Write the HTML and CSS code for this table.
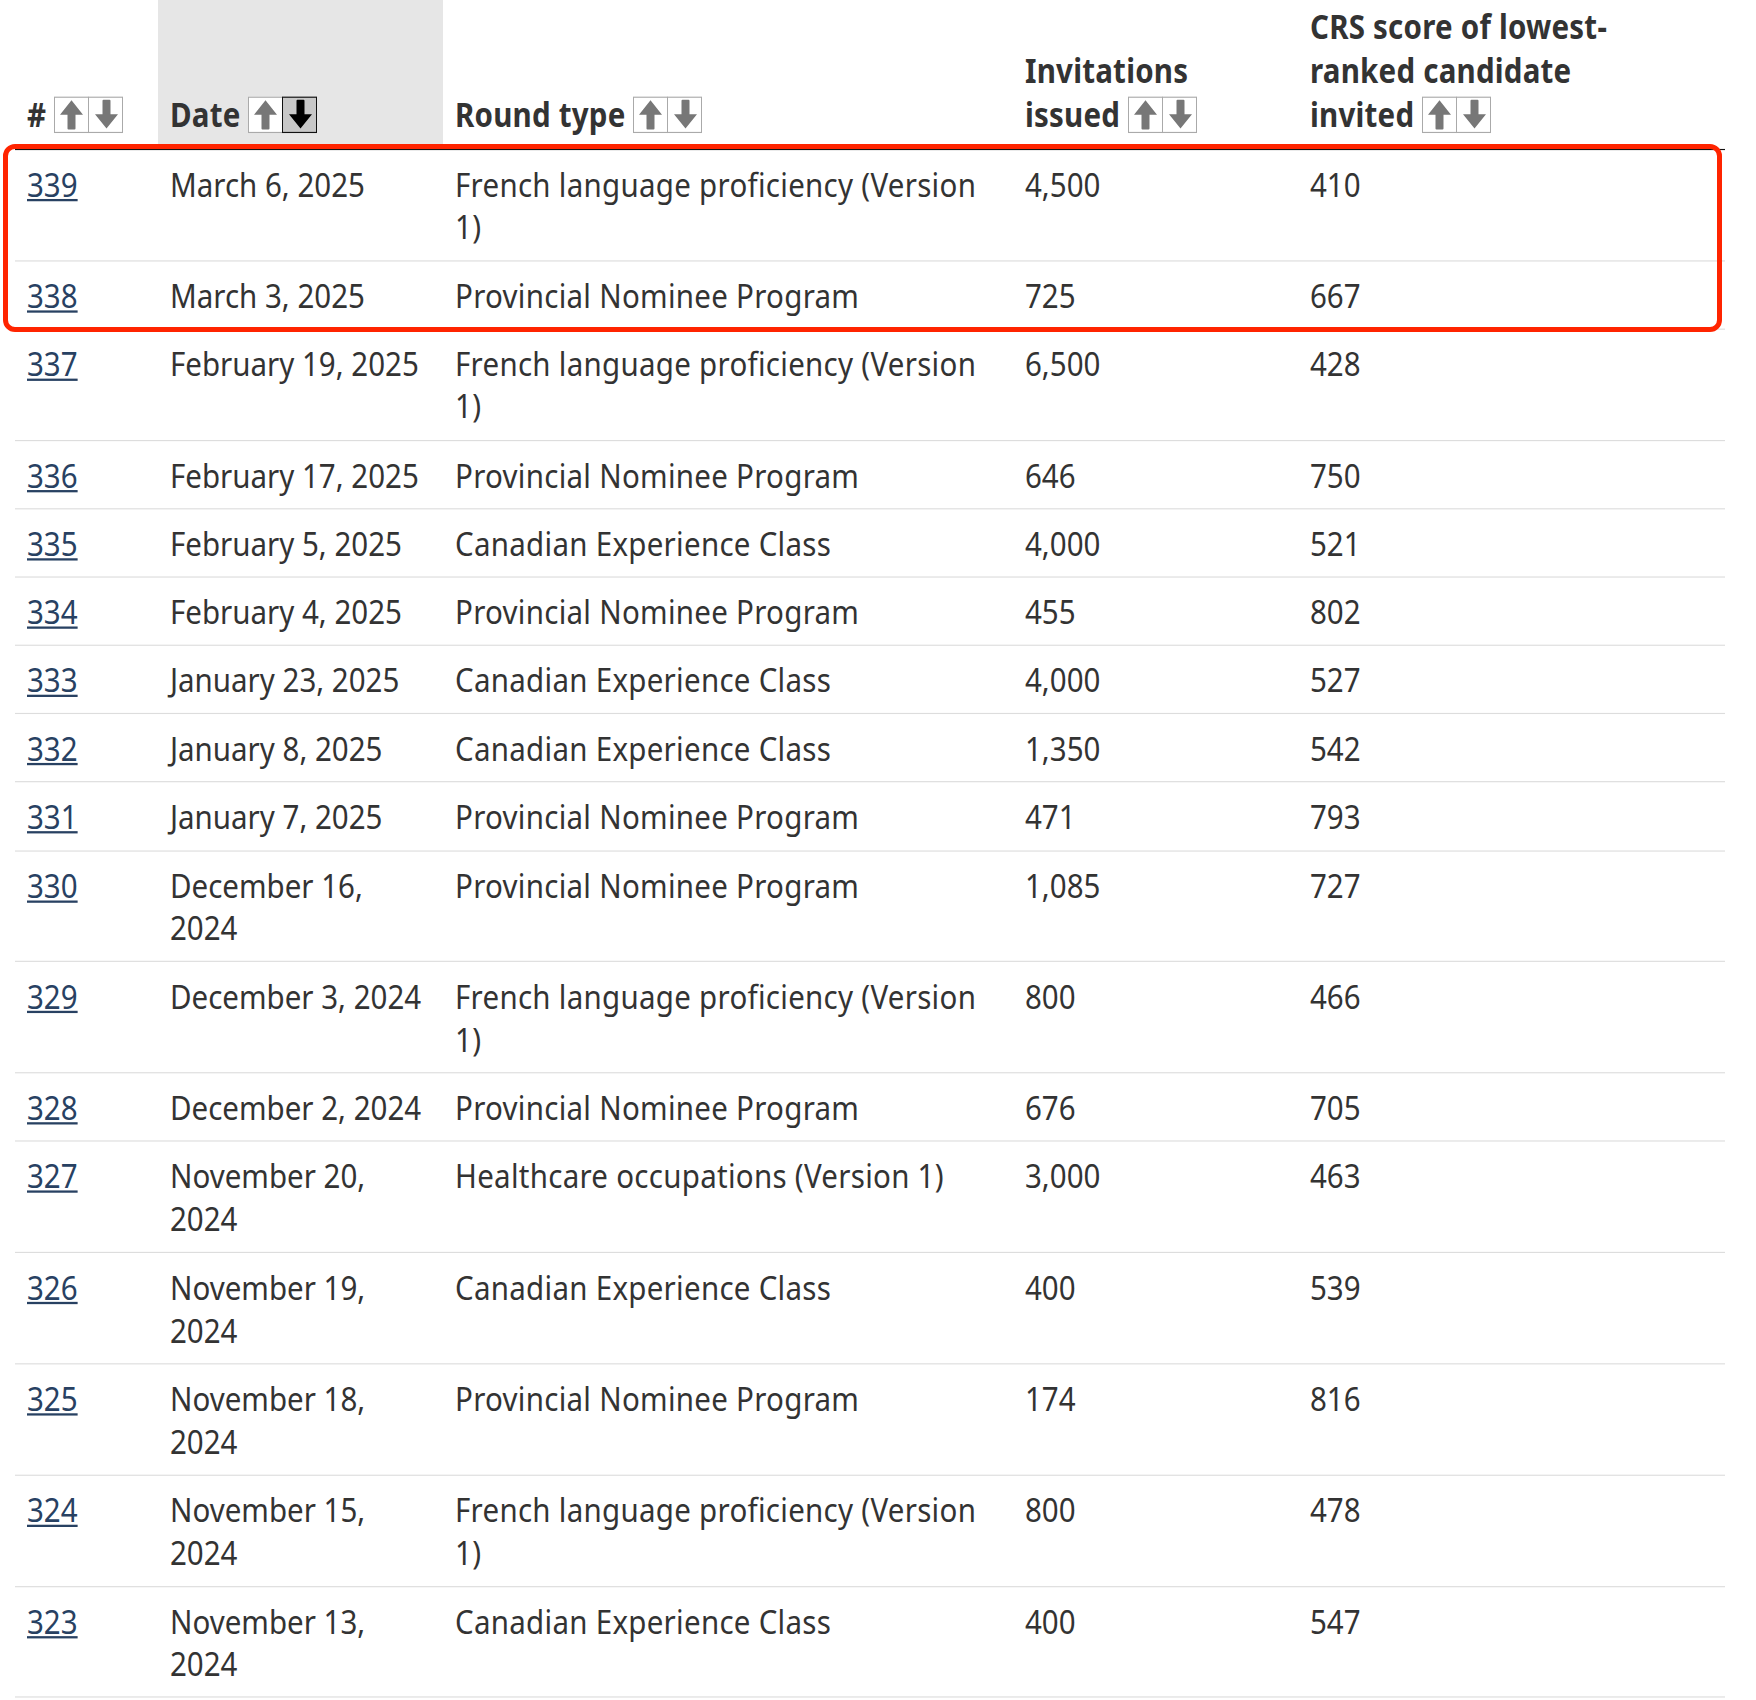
FILE: index.html
```html
<!DOCTYPE html>
<html lang="en">
<head>
<meta charset="utf-8">
<title>Express Entry rounds of invitations</title>
<link rel="stylesheet" href="styles.css">
</head>
<body>
<div class="stage">
<table class="draws">
<colgroup>
<col class="c-num"><col class="c-date"><col class="c-type"><col class="c-inv"><col class="c-crs">
</colgroup>
<thead>
<tr>
<th><span class="nw"># <span class="sort"><svg class="sb" viewBox="0 0 33 34" preserveAspectRatio="none"><path d="M16.5 2.5L28 17h-7.5v14q0 1-1 1h-6q-1 0-1-1V17H5z"/></svg><svg class="sb" viewBox="0 0 33 34" preserveAspectRatio="none"><path d="M14.5 2h6q1 0 1 1v13.5H29L17.5 31 6 16.5h7.5V3q0-1 1-1z"/></svg></span></span></th>
<th class="sorted"><span class="nw">Date <span class="sort"><svg class="sb" viewBox="0 0 33 34" preserveAspectRatio="none"><path d="M16.5 2.5L28 17h-7.5v14q0 1-1 1h-6q-1 0-1-1V17H5z"/></svg><svg class="sb on" viewBox="0 0 33 34" preserveAspectRatio="none"><path d="M14.5 2h6q1 0 1 1v13.5H29L17.5 31 6 16.5h7.5V3q0-1 1-1z"/></svg></span></span></th>
<th>Round <span class="nw">type <span class="sort"><svg class="sb" viewBox="0 0 33 34" preserveAspectRatio="none"><path d="M16.5 2.5L28 17h-7.5v14q0 1-1 1h-6q-1 0-1-1V17H5z"/></svg><svg class="sb" viewBox="0 0 33 34" preserveAspectRatio="none"><path d="M14.5 2h6q1 0 1 1v13.5H29L17.5 31 6 16.5h7.5V3q0-1 1-1z"/></svg></span></span></th>
<th>Invitations <span class="nw">issued <span class="sort"><svg class="sb" viewBox="0 0 33 34" preserveAspectRatio="none"><path d="M16.5 2.5L28 17h-7.5v14q0 1-1 1h-6q-1 0-1-1V17H5z"/></svg><svg class="sb" viewBox="0 0 33 34" preserveAspectRatio="none"><path d="M14.5 2h6q1 0 1 1v13.5H29L17.5 31 6 16.5h7.5V3q0-1 1-1z"/></svg></span></span></th>
<th class="crs">CRS score of lowest-ranked candidate <span class="nw">invited <span class="sort"><svg class="sb" viewBox="0 0 33 34" preserveAspectRatio="none"><path d="M16.5 2.5L28 17h-7.5v14q0 1-1 1h-6q-1 0-1-1V17H5z"/></svg><svg class="sb" viewBox="0 0 33 34" preserveAspectRatio="none"><path d="M14.5 2h6q1 0 1 1v13.5H29L17.5 31 6 16.5h7.5V3q0-1 1-1z"/></svg></span></span></th>
</tr>
</thead>
<tbody>
<tr><td><a href="#">339</a></td><td>March 6, 2025</td><td>French language proficiency (Version 1)</td><td>4,500</td><td>410</td></tr>
<tr><td><a href="#">338</a></td><td>March 3, 2025</td><td>Provincial Nominee Program</td><td>725</td><td>667</td></tr>
<tr><td><a href="#">337</a></td><td>February 19, 2025</td><td>French language proficiency (Version 1)</td><td>6,500</td><td>428</td></tr>
<tr><td><a href="#">336</a></td><td>February 17, 2025</td><td>Provincial Nominee Program</td><td>646</td><td>750</td></tr>
<tr><td><a href="#">335</a></td><td>February 5, 2025</td><td>Canadian Experience Class</td><td>4,000</td><td>521</td></tr>
<tr><td><a href="#">334</a></td><td>February 4, 2025</td><td>Provincial Nominee Program</td><td>455</td><td>802</td></tr>
<tr><td><a href="#">333</a></td><td>January 23, 2025</td><td>Canadian Experience Class</td><td>4,000</td><td>527</td></tr>
<tr><td><a href="#">332</a></td><td>January 8, 2025</td><td>Canadian Experience Class</td><td>1,350</td><td>542</td></tr>
<tr><td><a href="#">331</a></td><td>January 7, 2025</td><td>Provincial Nominee Program</td><td>471</td><td>793</td></tr>
<tr><td><a href="#">330</a></td><td>December 16, 2024</td><td>Provincial Nominee Program</td><td>1,085</td><td>727</td></tr>
<tr><td><a href="#">329</a></td><td>December 3, 2024</td><td>French language proficiency (Version 1)</td><td>800</td><td>466</td></tr>
<tr><td><a href="#">328</a></td><td>December 2, 2024</td><td>Provincial Nominee Program</td><td>676</td><td>705</td></tr>
<tr><td><a href="#">327</a></td><td>November 20, 2024</td><td>Healthcare occupations (Version 1)</td><td>3,000</td><td>463</td></tr>
<tr><td><a href="#">326</a></td><td>November 19, 2024</td><td>Canadian Experience Class</td><td>400</td><td>539</td></tr>
<tr><td><a href="#">325</a></td><td>November 18, 2024</td><td>Provincial Nominee Program</td><td>174</td><td>816</td></tr>
<tr><td><a href="#">324</a></td><td>November 15, 2024</td><td>French language proficiency (Version 1)</td><td>800</td><td>478</td></tr>
<tr><td><a href="#">323</a></td><td>November 13, 2024</td><td>Canadian Experience Class</td><td>400</td><td>547</td></tr>
</tbody>
</table>
</div>
<div class="highlight" aria-hidden="true"></div>
</body>
</html>
```

FILE: styles.css
```css
html, body {
  margin: 0;
  padding: 0;
  background: #ffffff;
}

body {
  position: relative;
  height: 1700px;
  overflow: hidden;
  font-family: "Noto Sans", "Open Sans", "DejaVu Sans", sans-serif;
  color: #333333;
}

.stage {
  padding-left: 15px;
  transform: scaleY(1.137);
  transform-origin: 0 0;
}

.draws {
  width: 1710px;
  border-collapse: collapse;
  table-layout: fixed;
  font-size: 29.5px;
}

.c-num { width: 143px; }
.c-date { width: 285px; }
.c-type { width: 570px; }
.c-inv { width: 285px; }
.c-crs { width: 427px; }

.draws th {
  text-align: left;
  vertical-align: bottom;
  font-weight: 700;
  line-height: 39px;
  letter-spacing: 0.22px;
  padding: 2.8px 12px 11px;
  border-bottom: 1px solid #111111;
}

.draws th.sorted {
  background: #e6e6e6;
}

.draws th.crs {
  padding-right: 44px;
}

.draws td {
  vertical-align: top;
  line-height: 37.6px;
  padding: 11px 12px 10.6px;
  border-top: 1px solid #dddddd;
}

.draws td:nth-child(3) {
  padding-right: 24px;
  letter-spacing: 0.28px;
}

.draws tbody tr:first-child td {
  border-top: none;
}

.draws tbody tr:last-child td {
  border-bottom: 1px solid #dddddd;
}

.draws a {
  color: #284162;
  text-decoration: underline;
}

.nw {
  white-space: nowrap;
}

.sort {
  white-space: nowrap;
}

.sb {
  width: 33px;
  height: 29.66px;
  border: 1px solid #aaaaaa;
  background: #ffffff;
  fill: #777777;
  vertical-align: -5.3px;
}

.sb + .sb {
  margin-left: -1px;
}

.sb.on {
  background: #c8c8c8;
  border-color: #111111;
  fill: #000000;
}

.highlight {
  position: absolute;
  left: 3px;
  top: 144px;
  width: 1719px;
  height: 188px;
  box-sizing: border-box;
  border: 5.5px solid #ff2400;
  border-radius: 12px;
  pointer-events: none;
}
```
